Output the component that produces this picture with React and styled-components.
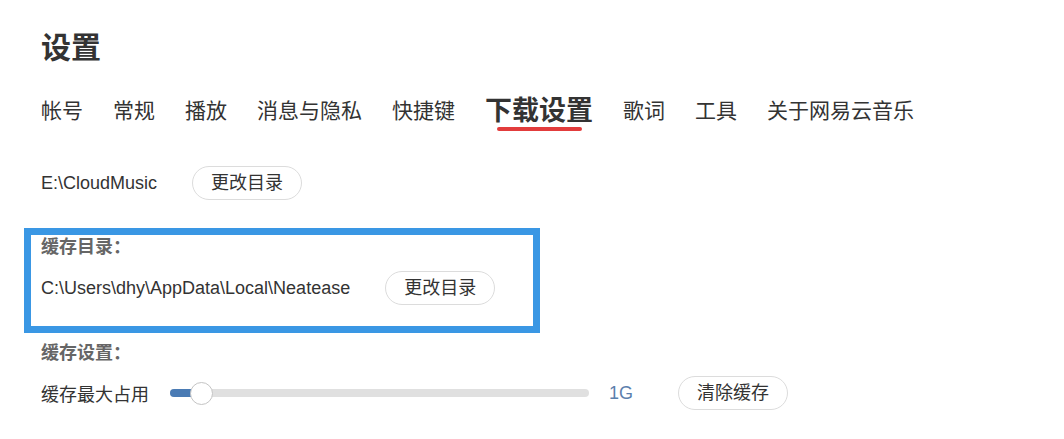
import { useState } from 'react';
import styled, { createGlobalStyle } from 'styled-components';

const GlobalStyle = createGlobalStyle`
  html, body {
    margin: 0;
    padding: 0;
    background: #fff;
  }
  body {
    font-family: "Liberation Sans", "Noto Sans CJK SC", sans-serif;
    color: #333;
  }
`;

const tabs = ['帐号', '常规', '播放', '消息与隐私', '快捷键', '下载设置', '歌词', '工具', '关于网易云音乐'];

const Page = styled.div`
  display: flex;
  flex-direction: column;
  padding: 28px 24px 0;
`;

const Title = styled.h1`
  margin: 0 0 0 17px;
  font-size: 30px;
  line-height: 40px;
  font-weight: bold;
  color: #333;
`;

const TabBar = styled.nav`
  display: flex;
  align-items: center;
  gap: 30px;
  margin: 28px 0 40px 17px;
  height: 30px;
`;

const Tab = styled.span`
  position: relative;
  font-size: ${(p) => (p.active ? '27px' : '21px')};
  font-weight: ${(p) => (p.active ? 'bold' : 'normal')};
  line-height: 30px;
  color: #333;
  cursor: pointer;
  white-space: nowrap;

  &::after {
    content: '';
    display: ${(p) => (p.active ? 'block' : 'none')};
    position: absolute;
    left: 50%;
    bottom: -5px;
    width: 85px;
    height: 4px;
    margin-left: -42px;
    border-radius: 2px;
    background: #e23c3c;
  }
`;

const Section = styled.section`
  display: flex;
  flex-direction: column;
  padding-left: 17px;
  margin-top: ${(p) => p.top || 0}px;
`;

const Highlight = styled.section`
  display: flex;
  flex-direction: column;
  width: 516px;
  box-sizing: border-box;
  border: 7px solid #3a97e4;
  padding: 2px 0 21px 10px;
  margin-top: 28px;
`;

const Label = styled.div`
  font-size: 18px;
  line-height: 20px;
  font-weight: bold;
  color: #666;
  margin-bottom: ${(p) => p.gap || 0}px;
`;

const Row = styled.div`
  display: flex;
  align-items: center;
  height: 34px;
`;

const Path = styled.span`
  font-size: 18px;
  color: #333;
  margin-right: 35px;
  white-space: nowrap;
`;

const PillButton = styled.button`
  height: 34px;
  box-sizing: border-box;
  padding: 0 18px;
  border: 1px solid #dcdcdc;
  border-radius: 17px;
  background: #fff;
  font-family: "Liberation Sans", "Noto Sans CJK SC", sans-serif;
  font-size: 18px;
  line-height: 32px;
  color: #333;
  cursor: pointer;
  margin-left: ${(p) => p.left || 0}px;
`;

const SliderLabel = styled.span`
  font-size: 18px;
  color: #333;
  margin-right: 21px;
`;

const Track = styled.div`
  position: relative;
  width: 419px;
  height: 8px;
  border-radius: 4px;
  background: #e0e0e0;
`;

const Fill = styled.div`
  height: 100%;
  border-radius: 4px 0 0 4px;
  background: #4a7bb4;
`;

const Thumb = styled.div`
  position: absolute;
  top: 50%;
  width: 23px;
  height: 23px;
  margin: -11.5px 0 0 -11.5px;
  box-sizing: border-box;
  border-radius: 50%;
  border: 1px solid #c4c4c4;
  background: #fff;
`;

const Value = styled.span`
  font-size: 18px;
  color: #5b80ad;
  margin-left: 20px;
`;

function CacheSlider({ percent }) {
  return (
    <Track>
      <Fill style={{ width: `${percent}%` }} />
      <Thumb style={{ left: `${percent}%` }} />
    </Track>
  );
}

export default function App() {
  const [active, setActive] = useState('下载设置');

  return (
    <>
      <GlobalStyle />
      <Page>
        <Title>设置</Title>
        <TabBar>
          {tabs.map((t) => (
            <Tab key={t} active={t === active ? 1 : 0} onClick={() => setActive(t)}>
              {t}
            </Tab>
          ))}
        </TabBar>

        <Section>
          <Row>
            <Path>E:\CloudMusic</Path>
            <PillButton>更改目录</PillButton>
          </Row>
        </Section>

        <Highlight>
          <Label gap={14}>缓存目录：</Label>
          <Row>
            <Path>C:\Users\dhy\AppData\Local\Neatease</Path>
            <PillButton>更改目录</PillButton>
          </Row>
        </Highlight>

        <Section top={10}>
          <Label gap={13}>缓存设置：</Label>
          <Row>
            <SliderLabel>缓存最大占用</SliderLabel>
            <CacheSlider percent={7.5} />
            <Value>1G</Value>
            <PillButton left={45}>清除缓存</PillButton>
          </Row>
        </Section>
      </Page>
    </>
  );
}
